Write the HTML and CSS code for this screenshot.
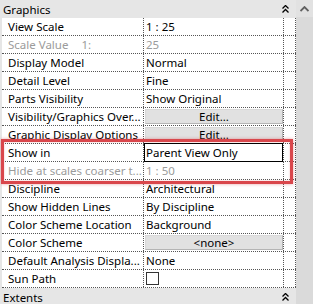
FILE: index.html
```html
<!DOCTYPE html>
<html>
<head>
<meta charset="utf-8">
<link rel="stylesheet" href="styles.css">
</head>
<body>
<div class="panel">
  <div class="main">
    <div class="group-head">
      <span class="group-title">Graphics</span>
      <svg class="chev" width="7" height="8" viewBox="0 0 7 8"><path d="M0.5 3.5 L3.5 0.5 L6.5 3.5 M0.5 7.5 L3.5 4.5 L6.5 7.5" fill="none" stroke="#000" stroke-width="1.3"/></svg>
    </div>
    <div class="rows">
      <div class="row"><div class="label">View Scale</div><div class="value">1 : 25</div><div class="pad"></div></div>
      <div class="row dis"><div class="label">Scale Value<span class="suffix">1:</span></div><div class="value">25</div><div class="pad"></div></div>
      <div class="row"><div class="label">Display Model</div><div class="value">Normal</div><div class="pad"></div></div>
      <div class="row"><div class="label">Detail Level</div><div class="value">Fine</div><div class="pad"></div></div>
      <div class="row"><div class="label">Parts Visibility</div><div class="value">Show Original</div><div class="pad"></div></div>
      <div class="row"><div class="label">Visibility/Graphics Over...</div><div class="value"><div class="btn">Edit...</div></div><div class="pad"></div></div>
      <div class="row"><div class="label">Graphic Display Options</div><div class="value"><div class="btn">Edit...</div></div><div class="pad"></div></div>
      <div class="row"><div class="label">Show in</div><div class="value boxed">Parent View Only</div><div class="pad"></div></div>
      <div class="row dis"><div class="label">Hide at scales coarser t...</div><div class="value">1 : 50</div><div class="pad"></div></div>
      <div class="row"><div class="label">Discipline</div><div class="value">Architectural</div><div class="pad"></div></div>
      <div class="row"><div class="label">Show Hidden Lines</div><div class="value">By Discipline</div><div class="pad"></div></div>
      <div class="row"><div class="label">Color Scheme Location</div><div class="value">Background</div><div class="pad"></div></div>
      <div class="row"><div class="label">Color Scheme</div><div class="value"><div class="btn">&lt;none&gt;</div></div><div class="pad"></div></div>
      <div class="row"><div class="label">Default Analysis Displa...</div><div class="value">None</div><div class="pad"></div></div>
      <div class="row"><div class="label">Sun Path</div><div class="value"><span class="check"></span></div><div class="pad"></div></div>
    </div>
    <div class="group-head">
      <span class="group-title">Extents</span>
      <svg class="chev" width="7" height="8" viewBox="0 0 7 8"><path d="M0.5 3.5 L3.5 0.5 L6.5 3.5 M0.5 7.5 L3.5 4.5 L6.5 7.5" fill="none" stroke="#000" stroke-width="1.3"/></svg>
    </div>
    <div class="highlight"></div>
  </div>
  <div class="scrollbar">
    <div class="sb-btn">
      <svg width="9" height="6" viewBox="0 0 9 6"><path d="M0.5 5 L4.5 1 L8.5 5" fill="none" stroke="#606060" stroke-width="1.8"/></svg>
    </div>
  </div>
</div>
</body>
</html>
```

FILE: styles.css
```css
html, body {
  margin: 0;
  padding: 0;
  background: #e3e3e3;
}
.panel {
  width: 313px;
  height: 304px;
  display: flex;
  overflow: hidden;
  font-family: "Noto Sans", "DejaVu Sans", sans-serif;
  font-size: 11.5px;
  color: #000;
}
.main {
  width: 296px;
  position: relative;
  background: #e6e6e6;
}
.group-head {
  height: 18px;
  display: flex;
  align-items: center;
  justify-content: space-between;
  padding: 0 7px 0 3px;
  box-sizing: border-box;
  background: #e6e6e6;
}
.group-title {
  line-height: 18px;
  padding-top: 1px;
}
.chev {
  display: block;
  margin-right: 0;
}
.rows {
  margin-left: 2px;
  background: #fff;
}
.row {
  display: grid;
  grid-template-columns: 142px 140px 12px;
  height: 18px;
  box-sizing: border-box;
  border-bottom: 1px dotted #555;
}
.label, .value, .pad {
  box-sizing: border-box;
  border-right: 1px dotted #555;
  white-space: nowrap;
  overflow: hidden;
  line-height: 17px;
}
.label {
  padding-left: 6px;
}
.value {
  padding-left: 2px;
}
.dis .label, .dis .value {
  color: #9b9b9b;
}
.suffix {
  margin-left: 13px;
}
.boxed {
  box-shadow: inset 0 0 0 1px #000;
  margin-top: -1px;
  height: 19px;
  line-height: 19px;
}
.value .btn {
  margin: 1px 0 1px -1px;
  height: 15px;
  box-sizing: border-box;
  background: #e1e1e1;
  border: 1px solid #b4b4b4;
  border-top-color: #d8d8d8;
  border-left-color: #d8d8d8;
  text-align: center;
  line-height: 13px;
}
.check {
  display: block;
  width: 13px;
  height: 13px;
  box-sizing: border-box;
  border: 1px solid #333;
  background: #fff;
  margin-top: 2px;
}
.highlight {
  position: absolute;
  left: 1px;
  top: 139px;
  width: 292px;
  height: 45px;
  box-sizing: border-box;
  border: 3px solid #d9474c;
  box-shadow: 0 0 3px rgba(217, 71, 76, 0.5), inset 0 0 2px rgba(217, 71, 76, 0.4);
}
.scrollbar {
  width: 17px;
  background: #dadada;
}
.sb-btn {
  height: 17px;
  display: flex;
  align-items: center;
  justify-content: center;
  background: #e2e2e2;
}
```
